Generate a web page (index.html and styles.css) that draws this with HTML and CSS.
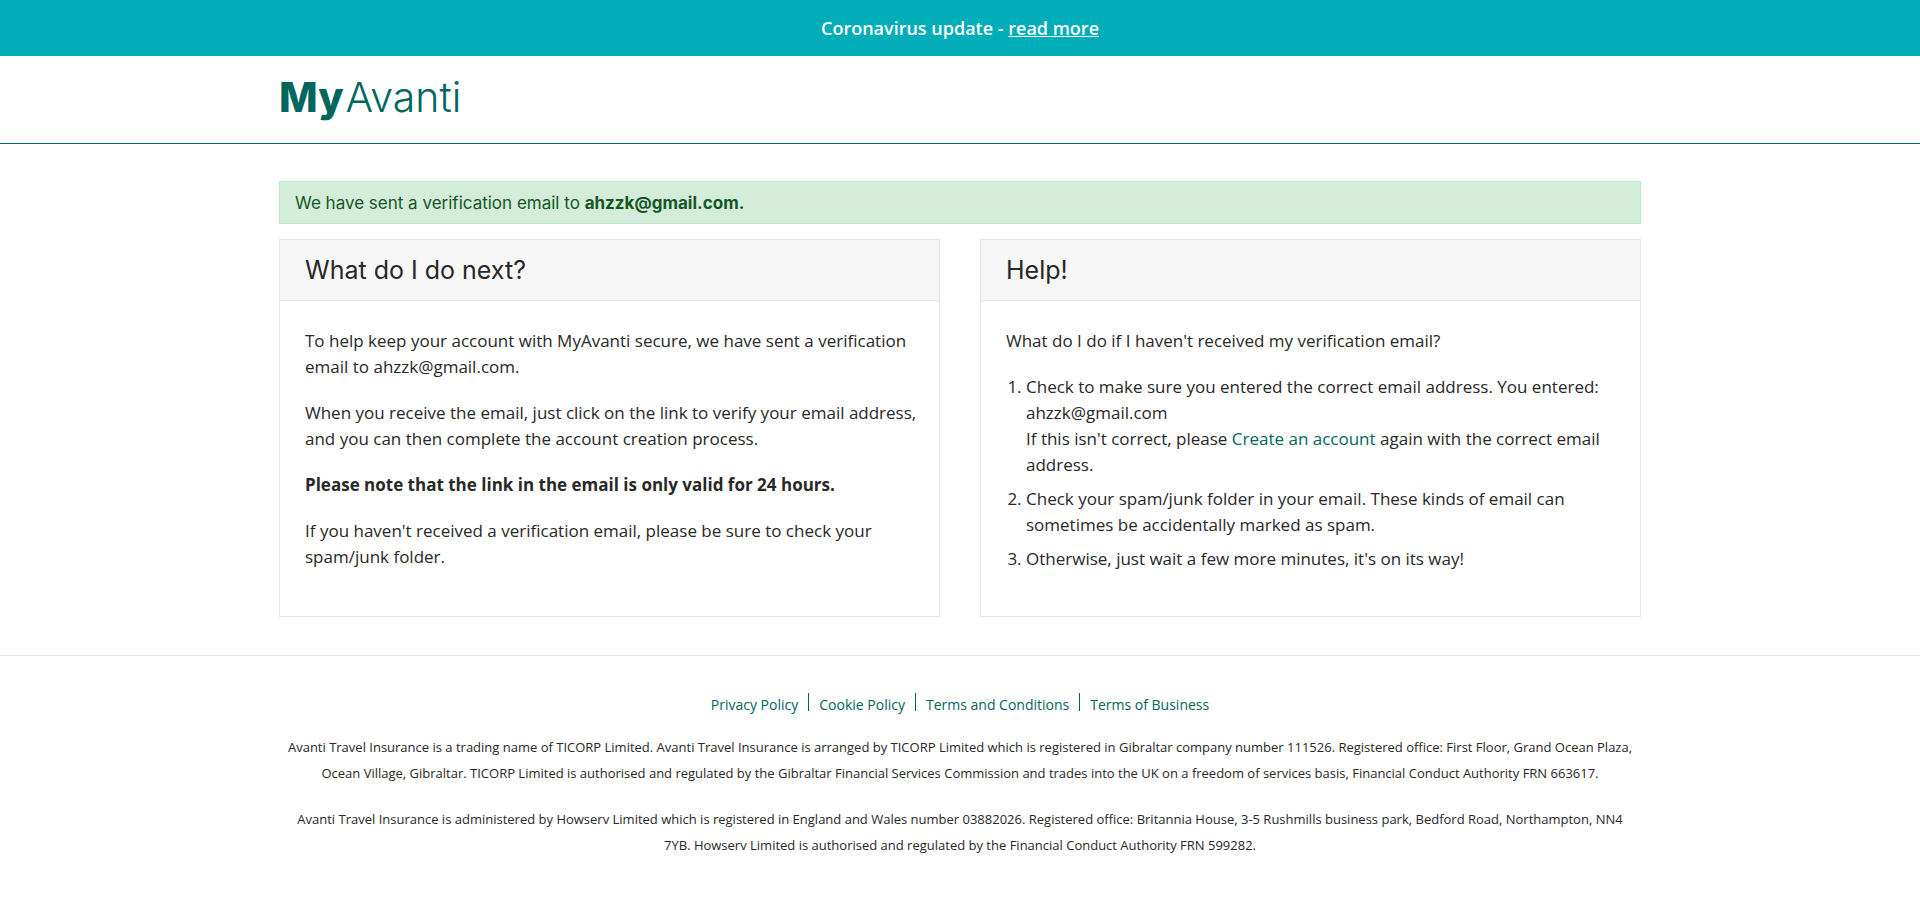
FILE: index.html
```html
<!DOCTYPE html>
<html lang="en">
<head>
<meta charset="utf-8">
<meta name="viewport" content="width=device-width, initial-scale=1">
<title>MyAvanti</title>
<link rel="stylesheet" href="styles.css">
</head>
<body>
<div class="notice">Coronavirus update - <a href="#">read more</a></div>
<header class="site-header">
  <div class="container">
    <a class="logo" href="#"><span class="logo-my">My</span><span class="logo-avanti">Avanti</span></a>
  </div>
</header>
<main class="container main">
  <div class="alert" role="status">We have sent a verification email to <strong>ahzzk@gmail.com.</strong></div>
  <div class="cards">
    <section class="card">
      <h2 class="card-header">What do I do next?</h2>
      <div class="card-body">
        <p>To help keep your account with MyAvanti secure, we have sent a verification email to ahzzk@gmail.com.</p>
        <p>When you receive the email, just click on the link to verify your email address, and you can then complete the account creation process.</p>
        <p><strong>Please note that the link in the email is only valid for 24 hours.</strong></p>
        <p>If you haven't received a verification email, please be sure to check your spam/junk folder.</p>
      </div>
    </section>
    <section class="card">
      <h2 class="card-header">Help!</h2>
      <div class="card-body">
        <p>What do I do if I haven't received my verification email?</p>
        <ol class="steps">
          <li>Check to make sure you entered the correct email address. You entered: ahzzk@gmail.com<br>If this isn't correct, please <a href="#">Create an account</a> again with the correct email address.</li>
          <li>Check your spam/junk folder in your email. These kinds of email can sometimes be accidentally marked as spam.</li>
          <li>Otherwise, just wait a few more minutes, it's on its way!</li>
        </ol>
      </div>
    </section>
  </div>
</main>
<footer class="site-footer">
  <div class="container">
    <nav class="footer-links" aria-label="Legal">
      <a href="#">Privacy Policy</a>
      <a href="#">Cookie Policy</a>
      <a href="#">Terms and Conditions</a>
      <a href="#">Terms of Business</a>
    </nav>
    <p class="legal">Avanti Travel Insurance is a trading name of TICORP Limited. Avanti Travel Insurance is arranged by TICORP Limited which is registered in Gibraltar company number 111526. Registered office: First Floor, Grand Ocean Plaza, Ocean Village, Gibraltar. TICORP Limited is authorised and regulated by the Gibraltar Financial Services Commission and trades into the UK on a freedom of services basis, Financial Conduct Authority FRN 663617.</p>
    <p class="legal">Avanti Travel Insurance is administered by Howserv Limited which is registered in England and Wales number 03882026. Registered office: Britannia House, 3-5 Rushmills business park, Bedford Road, Northampton, NN4 7YB. Howserv Limited is authorised and regulated by the Financial Conduct Authority FRN 599282.</p>
  </div>
</footer>
</body>
</html>
```
FILE: styles.css
```css
* { box-sizing: border-box; }
body {
  margin: 0;
  background: #fff;
  color: #282828;
  font: 17px/26px "Open Sans", "Noto Sans", sans-serif;
}
a { color: #00665e; text-decoration: none; }
.container {
  max-width: 1402px;
  margin: 0 auto;
  padding: 0 20px;
}
.notice {
  padding: 15px 20px;
  background: #00adb9;
  color: #fff;
  font-size: 18px;
  font-weight: 600;
  text-align: center;
}
.notice a { color: #fff; text-decoration: underline; }
.site-header {
  padding: 17px 0 21px;
  border-bottom: 1px solid #00665e;
}
.logo {
  display: inline-flex;
  gap: 2px;
  font: 41px/49px Inter, sans-serif;
}
.logo-my { font-weight: 800; }
.logo-avanti { font-weight: 300; }
.main {
  padding-top: 37px;
  padding-bottom: 38px;
}
.alert {
  margin-bottom: 15px;
  padding: 9px 15px 7px;
  border: 1px solid #c3e6cb;
  background: #d4edda;
  color: #155724;
  font-family: Inter, sans-serif;
  line-height: 25px;
}
.cards {
  display: grid;
  grid-template-columns: 1fr 1fr;
  gap: 40px;
}
.card { border: 1px solid #e6e6e6; }
.card-header {
  margin: 0;
  padding: 15px 25px;
  border-bottom: 1px solid #e6e6e6;
  background: #f7f7f7;
  font: 25px/30px Inter, sans-serif;
}
.card-body { padding: 27px 20px 26px 25px; }
.card-body p { margin: 0 0 20px; }
.steps { margin: 0; padding-left: 20px; }
.steps li { margin-bottom: 8px; }
.site-footer {
  padding: 37px 0 50px;
  border-top: 1px solid #e6e6e6;
}
.footer-links {
  display: flex;
  flex-wrap: wrap;
  justify-content: center;
  margin-bottom: 20px;
  font-size: 14px;
  line-height: 18px;
}
.footer-links a { padding-top: 3px; }
.footer-links a + a {
  margin-left: 10px;
  padding-left: 11px;
  background: linear-gradient(#00665e, #00665e) 0 0 / 1px 18px no-repeat;
}
.legal {
  margin: 0 0 20px;
  padding: 0 5px;
  font-size: 13px;
  line-height: 26px;
  text-align: center;
}
@media (max-width: 800px) {
  .cards { grid-template-columns: 1fr; }
}
```
